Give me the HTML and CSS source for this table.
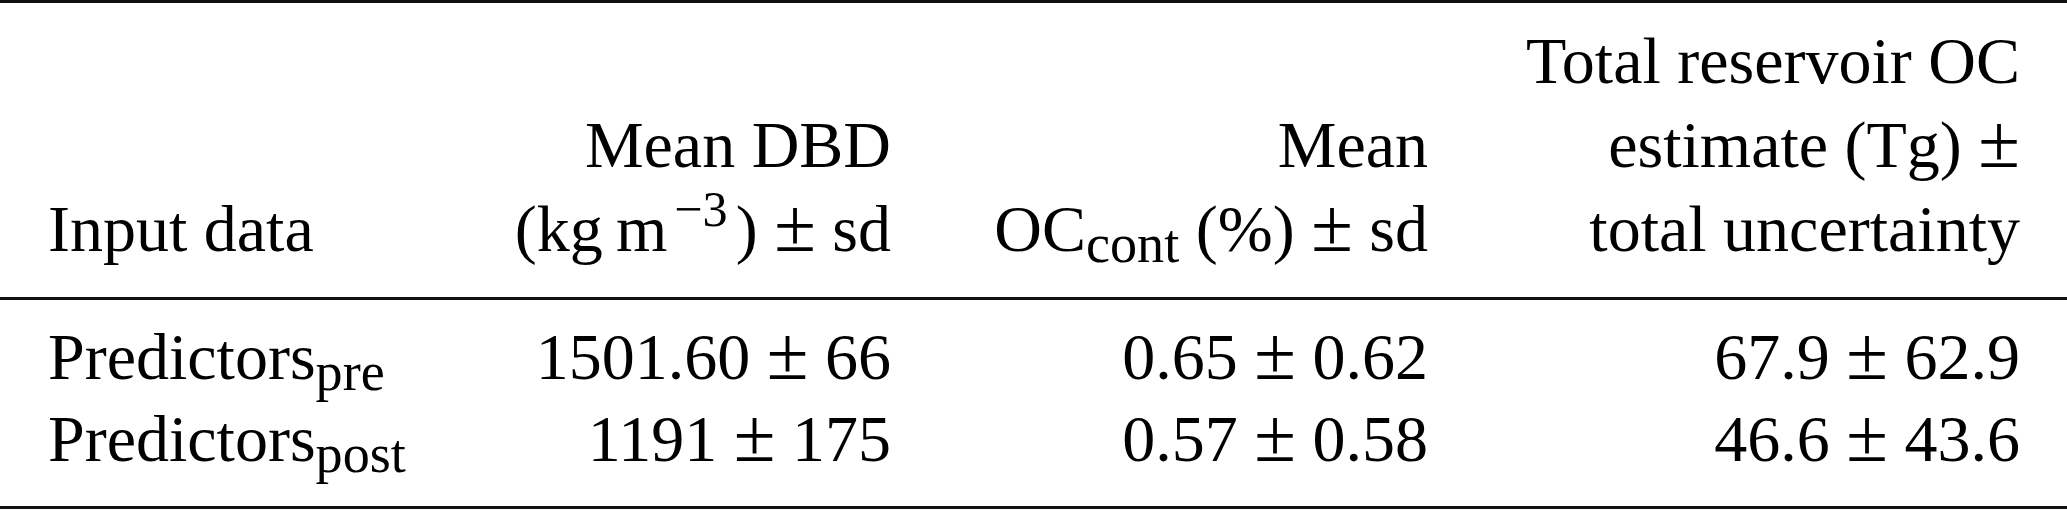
FILE: index.html
```html
<!DOCTYPE html>
<html lang="en">
<head>
  <meta charset="UTF-8">
  <title>Reservoir OC estimates</title>
  <link rel="stylesheet" href="styles.css">
</head>
<body>

  <table class="summary">
    <thead>
      <tr>
        <th class="col-input">Input data</th>
        <th class="col-dbd">Mean DBD<br>(kg&#8201;m<sup>&minus;3</sup>) <span class="pm">&plusmn;</span> sd</th>
        <th class="col-oc">Mean<br>OC<sub>cont</sub> (%) <span class="pm">&plusmn;</span> sd</th>
        <th class="col-total">Total reservoir OC<br>estimate (Tg) <span class="pm">&plusmn;</span><br>total uncertainty</th>
      </tr>
    </thead>
    <tbody>
      <tr class="first-row">
        <td class="col-input">Predictors<sub>pre</sub></td>
        <td>1501.60 <span class="pm">&plusmn;</span> 66</td>
        <td>0.65 <span class="pm">&plusmn;</span> 0.62</td>
        <td class="col-total">67.9 <span class="pm">&plusmn;</span> 62.9</td>
      </tr>
      <tr class="last-row">
        <td class="col-input">Predictors<sub>post</sub></td>
        <td>1191 <span class="pm">&plusmn;</span> 175</td>
        <td>0.57 <span class="pm">&plusmn;</span> 0.58</td>
        <td class="col-total">46.6 <span class="pm">&plusmn;</span> 43.6</td>
      </tr>
    </tbody>
  </table>

</body>
</html>
```

FILE: styles.css
```css
body {
  margin: 0;
  background-color: #fff;
  color: #000;
  font-family: 'Liberation Serif', 'Times New Roman', serif;
}

.summary {
  width: 2067px;
  table-layout: fixed;
  border-collapse: separate;
  border-spacing: 0;
  font-size: 66px;
}

th, td {
  box-sizing: border-box;
  padding: 0;
  text-align: right;
  font-weight: normal;
  white-space: nowrap;
}

th {
  vertical-align: bottom;
  line-height: 84px;
  padding-top: 16px;
  padding-bottom: 26px;
  border-top: 3px solid #111;
  border-bottom: 3px solid #111;
}

td {
  line-height: 82px;
}

.first-row td {
  padding-top: 16px;
}

.last-row td {
  padding-bottom: 26px;
  border-bottom: 3px solid #111;
}

.col-input {
  width: 460px;
  padding-left: 48px;
  text-align: left;
}

.col-dbd {
  width: 431px;
}

.col-oc {
  width: 537px;
}

.col-total {
  width: 639px;
  padding-right: 47px;
}

/* math-style plus-minus, a bit larger than the text glyph */
.pm {
  font-size: 1.15em;
  line-height: 0;
}

sub {
  font-size: 0.82em;
  line-height: 0;
  vertical-align: -0.2em;
}

sup {
  font-size: 0.76em;
  line-height: 0;
  vertical-align: 0.5em;
  margin: 0 0.16em 0 0.14em;
}
```
